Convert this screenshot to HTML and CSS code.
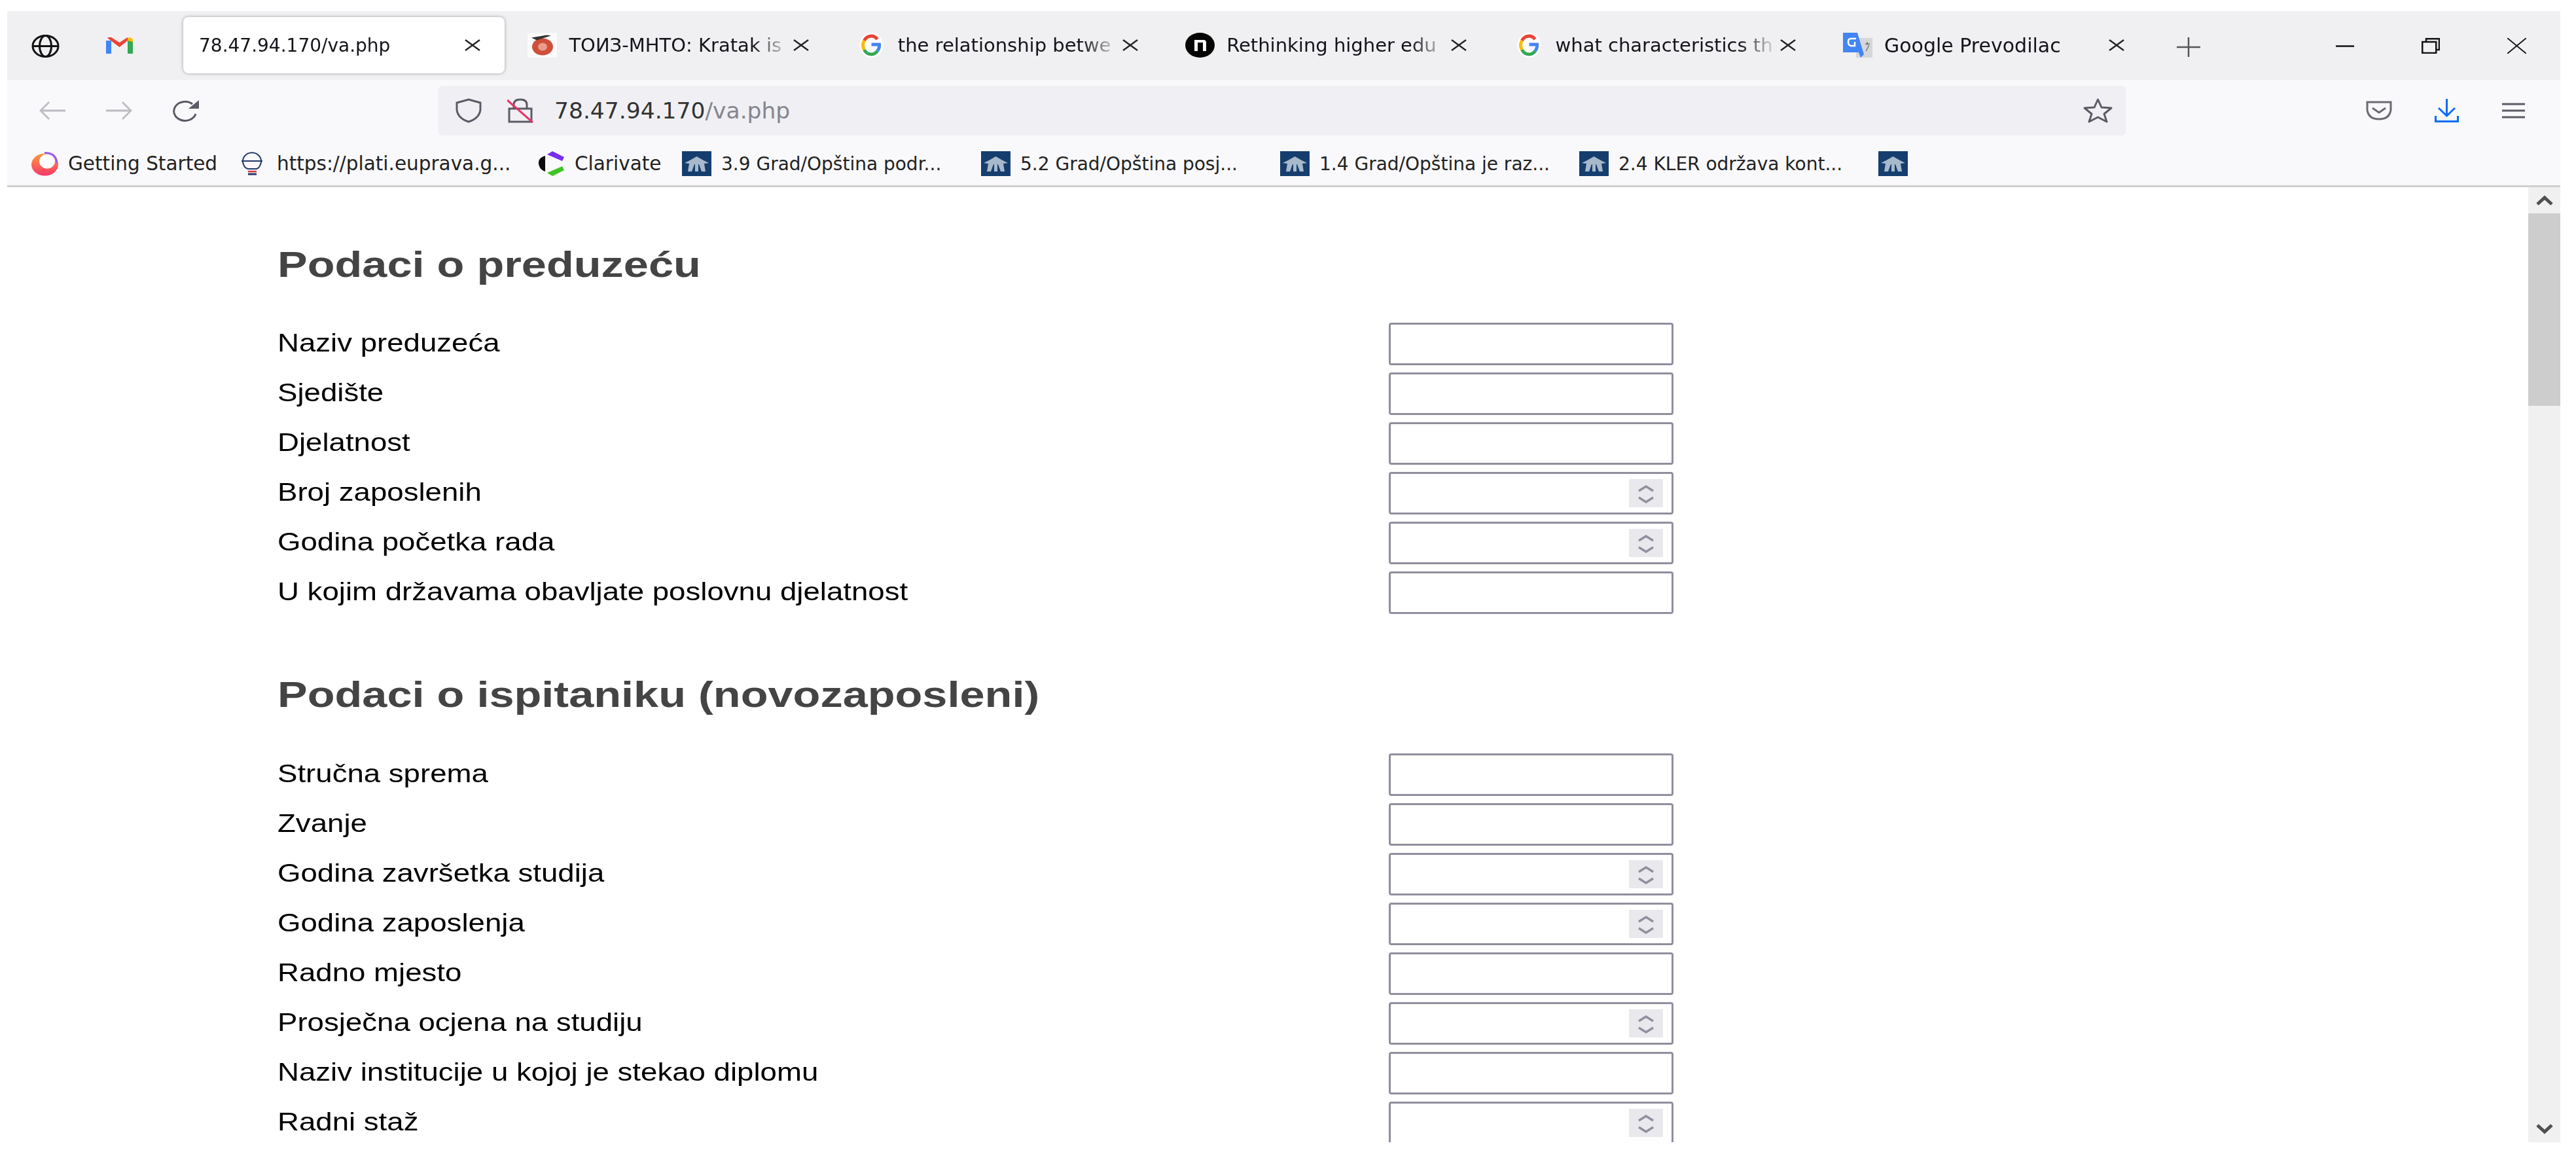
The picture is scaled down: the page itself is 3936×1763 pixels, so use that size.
FILE: index.html
```html
<!DOCTYPE html>
<html lang="en">
  <head>
    <meta charset="UTF-8" />
    <title>78.47.94.170/va.php</title>
    <link rel="stylesheet" href="styles.css">
  </head>
  <body>
    <svg class="defs" width="0" height="0">
      <symbol id="close" viewBox="0 0 24 18">
        <path d="M1 1 23 17M23 1 1 17" fill="none" stroke="#222" stroke-width="2.4" />
      </symbol>
      <symbol id="google" viewBox="0 0 36 38">
        <ellipse cx="18" cy="19" rx="18" ry="19" fill="#fff" />
        <g fill="none" stroke-width="5">
          <path d="M7 12A12 13 0 0 1 27 10" stroke="#ea4335" />
          <path d="M7 12A12 13 0 0 0 7 26" stroke="#fbbc05" />
          <path d="M7 26A12 13 0 0 0 27 28" stroke="#34a853" />
          <path d="M27 28A12 13 0 0 0 30 18H18" stroke="#4285f4" />
        </g>
      </symbol>
      <symbol id="kler" viewBox="0 0 45 38">
        <rect width="45" height="38" fill="#153e6e" />
        <path d="M22.500 8 33 14 41 18 34 19 36 31H30L26 20H25L25 31H20L20 20H19L15 31H9L11 19 4 18 12 14Z" fill="#a8b9cb" />
      </symbol>
      <symbol id="spin" viewBox="0 0 52 43">
        <rect width="52" height="43" fill="#e9e9ed" />
        <path d="M15 18 26 11 37 18M15 28 26 35 37 28" fill="none" stroke="#8f8f9d" stroke-width="3.5" />
      </symbol>
    </svg>

    <div class="window">
      <div class="tabbar">
        <svg class="globe" viewBox="0 0 43 35">
          <g fill="none" stroke="#111" stroke-width="3">
            <ellipse cx="21.5" cy="17.5" rx="19.5" ry="16" />
            <ellipse cx="21.5" cy="17.5" rx="9" ry="16" />
            <path d="M2 17.500H41" />
          </g>
        </svg>
        <svg class="gmail" viewBox="0 0 41 25">
          <path d="M0 5V25H8V5Z" fill="#4285f4" />
          <path d="M33 5V25H41V5Z" fill="#34a853" />
          <path d="M2 1 20.500 15 33 5V0L20.500 8 8 0H4Z" fill="#ea4335" />
          <path d="M33 5 41 7V3L37 0 33 1Z" fill="#fbbc05" />
        </svg>
        <div class="tabs">
          <div class="tab tab-active">
            <span class="title">78.47.94.170/va.php</span>
            <svg class="tab-close"><use href="#close" /></svg>
          </div>
          <div class="tab">
            <svg class="favicon" viewBox="0 0 45 37">
              <rect width="45" height="37" fill="#fbfbfb" />
              <ellipse cx="23" cy="21" rx="16" ry="13" fill="#cf4f3a" />
              <ellipse cx="23" cy="21" rx="7" ry="6" fill="#e99c8c" />
              <path d="M6 7 30 3 36 4 14 11Z" fill="#333" />
            </svg>
            <span class="title">ТОИЗ-МНТО: Kratak is</span>
            <svg class="tab-close"><use href="#close" /></svg>
          </div>
          <div class="tab">
            <svg class="favicon"><use href="#google" /></svg>
            <span class="title">the relationship betwe</span>
            <svg class="tab-close"><use href="#close" /></svg>
          </div>
          <div class="tab">
            <svg class="favicon" viewBox="0 0 45 38">
              <ellipse cx="22.500" cy="19" rx="22.500" ry="19" fill="#050505" />
              <path d="M14 28V11H28Q32 11 32 15V28H27V15H19V28Z" fill="#fff" />
            </svg>
            <span class="title">Rethinking higher edu</span>
            <svg class="tab-close"><use href="#close" /></svg>
          </div>
          <div class="tab">
            <svg class="favicon"><use href="#google" /></svg>
            <span class="title">what characteristics th</span>
            <svg class="tab-close"><use href="#close" /></svg>
          </div>
          <div class="tab">
            <svg class="favicon" viewBox="0 0 45 38">
              <rect x="20" y="8" width="25" height="30" fill="#d5d7da" />
              <path d="M0 0H22L32 33 27 38 24 30H0Z" fill="#4285f4" />
              <path d="M20 9H12Q8 9 8 14T12 20H18V14" fill="none" stroke="#fff" stroke-width="2.500" />
              <path d="M34 17 41 17M37 14V19M35 28 40 19" stroke="#777" stroke-width="1.500" />
            </svg>
            <span class="title title-last">Google Prevodilac</span>
            <svg class="tab-close"><use href="#close" /></svg>
          </div>
        </div>
        <svg class="new-tab" viewBox="0 0 36 30">
          <path d="M0 15H36M18 0V30" stroke="#555" stroke-width="2.500" />
        </svg>
        <div class="win-btns">
          <svg class="win-min" viewBox="0 0 28 3"><path d="M0 1.500H28" stroke="#111" stroke-width="2.500" /></svg>
          <svg class="win-restore" viewBox="0 0 28 24">
            <g fill="none" stroke="#111" stroke-width="2.500">
              <rect x="1.250" y="6" width="21" height="17" />
              <path d="M7 6V1.250H27V18H22" />
            </g>
          </svg>
          <svg class="win-x" viewBox="0 0 29 24"><path d="M0 0 29 24M29 0 0 24" stroke="#111" stroke-width="1.800" /></svg>
        </div>
      </div>

      <div class="navbar">
        <svg class="nav-arrow" viewBox="0 0 40 28">
          <path d="M40 14H2M15 1 2 14 15 27" fill="none" stroke="#bcbcc2" stroke-width="2.800" />
        </svg>
        <svg class="nav-arrow" viewBox="0 0 40 28">
          <path d="M0 14H38M25 1 38 14 25 27" fill="none" stroke="#bcbcc2" stroke-width="2.800" />
        </svg>
        <svg class="nav-reload" viewBox="0 0 40 33">
          <path d="M35 21A17 14.500 0 1 1 30 6" fill="none" stroke="#5b5b66" stroke-width="3" />
          <path d="M40 0V13H24Z" fill="#5b5b66" />
        </svg>
        <div class="urlbar">
          <svg class="url-shield" viewBox="0 0 40 38">
            <path d="M20 2 38 7V18Q36 31 20 36 4 31 2 18V7Z" fill="none" stroke="#5b5b66" stroke-width="3" />
          </svg>
          <svg class="url-lock" viewBox="0 0 40 38">
            <path d="M10 15V10Q10 2 20 2T30 10V15M3 16H37V36H3Z" fill="none" stroke="#5b5b66" stroke-width="3" />
            <path d="M0 3 39 37" stroke="#e8336a" stroke-width="3" />
          </svg>
          <span class="url-text">78.47.94.170<span class="url-path">/va.php</span></span>
          <svg class="url-star" viewBox="0 0 45 38">
            <path d="M22.500 2 28 14 43 15 32 24 36 36 22.500 29 9 36 13 24 2 15 17 14Z" fill="none" stroke="#5b5b66" stroke-width="3" stroke-linejoin="round" />
          </svg>
        </div>
        <svg class="nav-pocket" viewBox="0 0 40 30">
          <path d="M2 2H38V14Q36 28 20 28T2 14Z" fill="none" stroke="#6a6a72" stroke-width="3" />
          <path d="M10 11 20 18 30 11" fill="none" stroke="#6a6a72" stroke-width="3" />
        </svg>
        <svg class="nav-download" viewBox="0 0 37 36">
          <path d="M18.500 0V26M6 14 18.500 26 31 14" fill="none" stroke="#0a6cf5" stroke-width="3" />
          <path d="M1.500 26V34.500H35.500V26" fill="none" stroke="#0a6cf5" stroke-width="3" />
        </svg>
        <svg class="nav-menu" viewBox="0 0 35 24">
          <path d="M0 2H35M0 12H35M0 22H35" stroke="#5b5b66" stroke-width="3" />
        </svg>
      </div>

      <div class="bookmarks">
        <div class="bm bm-first">
          <svg class="bm-icon" viewBox="0 0 41 37">
            <defs>
              <linearGradient id="fx" x1="0" y1="0" x2="0" y2="1">
                <stop offset="0" stop-color="#ff9b3d" />
                <stop offset="1" stop-color="#f6386b" />
              </linearGradient>
            </defs>
            <ellipse cx="20.500" cy="20" rx="20.500" ry="17" fill="url(#fx)" />
            <ellipse cx="24" cy="15" rx="12" ry="11" fill="#fff" />
            <path d="M20 2Q38 2 39 18" fill="none" stroke="#9b5cf0" stroke-width="3" />
          </svg>
          <span>Getting Started</span>
        </div>
        <div class="bm bm-uprava">
          <svg class="bm-icon" viewBox="0 0 34 38">
            <path d="M4 20A14 13 0 1 1 30 20Q28 26 24 27H11Q6 26 4 20Z" fill="none" stroke="#23386b" stroke-width="2" />
            <path d="M1 15H33" stroke="#23386b" stroke-width="2" />
            <path d="M11 31H24" stroke="#d8343f" stroke-width="2.500" />
            <path d="M11 35H24" stroke="#23386b" stroke-width="3" />
          </svg>
          <span>https://plati.euprava.g...</span>
        </div>
        <div class="bm bm-clarivate">
          <svg class="bm-icon" viewBox="0 0 42 38">
            <path d="M12 7Q1 10 2 19T12 31Z" fill="#0b0b0b" />
            <path d="M15 5 23 0 41 9 38 15 22 8Z" fill="#7a2cf0" />
            <path d="M15 33 23 38 41 29 38 23 22 30Z" fill="#3fc423" />
          </svg>
          <span>Clarivate</span>
        </div>
        <div class="bm"><svg class="bm-icon"><use href="#kler" /></svg><span>3.9 Grad/Opština podr...</span></div>
        <div class="bm"><svg class="bm-icon"><use href="#kler" /></svg><span>5.2 Grad/Opština posj...</span></div>
        <div class="bm"><svg class="bm-icon"><use href="#kler" /></svg><span>1.4 Grad/Opština je raz...</span></div>
        <div class="bm"><svg class="bm-icon"><use href="#kler" /></svg><span>2.4 KLER održava kont...</span></div>
        <div class="bm"><svg class="bm-icon"><use href="#kler" /></svg></div>
      </div>

      <div class="content">
        <main class="page">
          <h2><span>Podaci o preduzeću</span></h2>
          <div class="row"><label><span>Naziv preduzeća</span></label><div class="field"><input type="text"></div></div>
          <div class="row"><label><span>Sjedište</span></label><div class="field"><input type="text"></div></div>
          <div class="row"><label><span>Djelatnost</span></label><div class="field"><input type="text"></div></div>
          <div class="row"><label><span>Broj zaposlenih</span></label><div class="field"><input type="text"><svg class="spin"><use href="#spin" /></svg></div></div>
          <div class="row"><label><span>Godina početka rada</span></label><div class="field"><input type="text"><svg class="spin"><use href="#spin" /></svg></div></div>
          <div class="row"><label><span>U kojim državama obavljate poslovnu djelatnost</span></label><div class="field"><input type="text"></div></div>

          <h2 class="second"><span>Podaci o ispitaniku (novozaposleni)</span></h2>
          <div class="row"><label><span>Stručna sprema</span></label><div class="field"><input type="text"></div></div>
          <div class="row"><label><span>Zvanje</span></label><div class="field"><input type="text"></div></div>
          <div class="row"><label><span>Godina završetka studija</span></label><div class="field"><input type="text"><svg class="spin"><use href="#spin" /></svg></div></div>
          <div class="row"><label><span>Godina zaposlenja</span></label><div class="field"><input type="text"><svg class="spin"><use href="#spin" /></svg></div></div>
          <div class="row"><label><span>Radno mjesto</span></label><div class="field"><input type="text"></div></div>
          <div class="row"><label><span>Prosječna ocjena na studiju</span></label><div class="field"><input type="text"><svg class="spin"><use href="#spin" /></svg></div></div>
          <div class="row"><label><span>Naziv institucije u kojoj je stekao diplomu</span></label><div class="field"><input type="text"></div></div>
          <div class="row"><label><span>Radni staž</span></label><div class="field"><input type="text"><svg class="spin"><use href="#spin" /></svg></div></div>
        </main>

        <div class="scrollbar">
          <div class="scroll-btn">
            <svg viewBox="0 0 26 16"><path d="M2 14 13 4 24 14" fill="none" stroke="#505050" stroke-width="5" /></svg>
          </div>
          <div class="scroll-thumb"></div>
          <div class="scroll-track"></div>
          <div class="scroll-btn">
            <svg viewBox="0 0 26 16"><path d="M2 2 13 12 24 2" fill="none" stroke="#505050" stroke-width="5" /></svg>
          </div>
        </div>
      </div>
    </div>
  </body>
</html>
```

FILE: styles.css
```css
/* Basic Reset */
* {
  margin: 0;
  padding: 0;
  box-sizing: border-box;
}
html,
body {
  height: 100%;
  overflow: hidden;
}
body {
  background: #fff;
  font-family: "DejaVu Sans", sans-serif;
}
.defs {
  display: block;
}

.window {
  display: flex;
  flex-direction: column;
  height: 1728px;
  margin: 17px 24px 0 11px;
  overflow: hidden;
}

/* Tab strip */
.tabbar {
  display: flex;
  align-items: flex-start;
  height: 105px;
  flex: none;
  background: #f0f0f2;
}
.globe {
  width: 43px;
  height: 35px;
  margin: 36px 0 0 37px;
}
.gmail {
  width: 41px;
  height: 25px;
  margin: 40px 0 0 71px;
}
.tabs {
  display: flex;
  gap: 11.4px;
  margin: 9px 0 0 77px;
}
.tab {
  display: flex;
  align-items: center;
  width: 491px;
  height: 86px;
  padding-left: 24px;
  border-radius: 8px;
}
.tab-active {
  background: #fff;
  box-shadow: 0 0 5px rgba(0, 0, 0, 0.35);
}
.favicon {
  width: 45px;
  height: 38px;
  margin-right: 18px;
  flex: none;
}
.title {
  width: 343px;
  overflow: hidden;
  white-space: nowrap;
  color: #15141a;
  font-size: 29px;
  -webkit-mask-image: linear-gradient(to right, #000 82%, transparent 99%);
  mask-image: linear-gradient(to right, #000 82%, transparent 99%);
  flex: none;
}
.tab-active .title {
  width: 406px;
  font-size: 28px;
}
.title-last {
  font-size: 30px;
}
.tab-close {
  width: 24px;
  height: 18px;
  flex: none;
}
.new-tab {
  width: 36px;
  height: 30px;
  margin: 40px 0 0 43px;
}
.win-btns {
  display: flex;
  align-items: center;
  margin: 41px 0 0 207px;
}
.win-min {
  width: 28px;
  height: 3px;
}
.win-restore {
  width: 28px;
  height: 24px;
  margin-left: 103px;
}
.win-x {
  width: 29px;
  height: 24px;
  margin-left: 103px;
}

/* Navigation */
.navbar {
  display: flex;
  align-items: center;
  height: 94px;
  flex: none;
  padding-top: 9px;
  padding-bottom: 9px;
  background: #f9f9fb;
}
.nav-arrow {
  width: 40px;
  height: 28px;
  margin-left: 49px;
}
.nav-arrow + .nav-arrow {
  margin-left: 62px;
}
.nav-reload {
  width: 40px;
  height: 33px;
  margin-left: 62px;
}
.urlbar {
  display: flex;
  align-items: center;
  width: 2578px;
  height: 76px;
  margin-left: 366px;
  padding-left: 26px;
  background: #f0f0f4;
  border-radius: 6px;
}
.url-shield,
.url-lock {
  width: 40px;
  height: 38px;
  flex: none;
}
.url-lock {
  margin-left: 39px;
}
.url-text {
  margin-left: 32px;
  color: #333;
  font-size: 34.5px;
  white-space: nowrap;
  flex: 1;
}
.url-path {
  color: #85858f;
}
.url-star {
  width: 45px;
  height: 38px;
  margin-right: 20px;
  flex: none;
}
.nav-pocket {
  width: 40px;
  height: 30px;
  margin-left: 367px;
}
.nav-download {
  width: 37px;
  height: 36px;
  margin-left: 65px;
}
.nav-menu {
  width: 35px;
  height: 24px;
  margin-left: 66px;
}

/* Bookmarks */
.bookmarks {
  display: flex;
  align-items: center;
  height: 70px;
  flex: none;
  padding: 1px 0 0 37px;
  background: #f9f9fb;
  border-bottom: 3px solid #cfcfd1;
  color: #222;
  font-size: 28px;
  white-space: nowrap;
}
.bm {
  display: flex;
  align-items: center;
  gap: 15px;
  width: 457px;
  flex: none;
}
.bm-first,
.bm-uprava,
.bm-clarivate {
  font-size: 29.5px;
}
.bm-first {
  width: 320px;
}
.bm-uprava {
  width: 453px;
  gap: 21px;
}
.bm-clarivate {
  width: 221px;
}
.bm-icon {
  width: 45px;
  height: 38px;
  flex: none;
}
.bm-first .bm-icon {
  width: 41px;
}
.bm-uprava .bm-icon {
  width: 34px;
}
.bm-clarivate .bm-icon {
  width: 42px;
}

/* Page */
.content {
  display: flex;
  flex: 1;
  min-height: 0;
}
.page {
  flex: 1;
  overflow: hidden;
  padding: 86px 0 0 413px;
  background: #fff;
  font-family: "Liberation Sans", Arial, sans-serif;
}
h2 {
  margin-bottom: 57px;
  color: #444;
  font-size: 55px;
  line-height: 64px;
  white-space: nowrap;
}
h2 span,
label span {
  display: inline-block;
  transform-origin: left center;
}
h2 span {
  transform: scaleX(1.245);
}
h2.second {
  margin-top: 91px;
  margin-bottom: 58px;
}
.row {
  display: flex;
  align-items: center;
  height: 65px;
  margin-bottom: 11px;
}
label {
  width: 1698px;
  flex: none;
  padding-bottom: 3px;
  color: #000;
  font-size: 38px;
  white-space: nowrap;
}
label span {
  transform: scaleX(1.2);
}
.field {
  display: flex;
  align-items: center;
  width: 435px;
  height: 65px;
  padding-right: 13px;
  background: #fff;
  border: 3px solid #8f8f9d;
  border-radius: 4px;
}
.field input {
  width: 100%;
  min-width: 0;
  height: 100%;
  border: none;
  background: none;
  outline: none;
  flex: 1;
}
.spin {
  width: 52px;
  height: 43px;
  flex: none;
}

/* Scrollbar */
.scrollbar {
  display: flex;
  flex-direction: column;
  width: 49px;
  flex: none;
  background: #f0f0f0;
}
.scroll-btn {
  display: flex;
  align-items: center;
  justify-content: center;
  height: 40px;
  flex: none;
}
.scroll-btn svg {
  width: 26px;
  height: 16px;
}
.scroll-thumb {
  height: 294px;
  flex: none;
  background: #cdcdcd;
}
.scroll-track {
  flex: 1;
}
```
